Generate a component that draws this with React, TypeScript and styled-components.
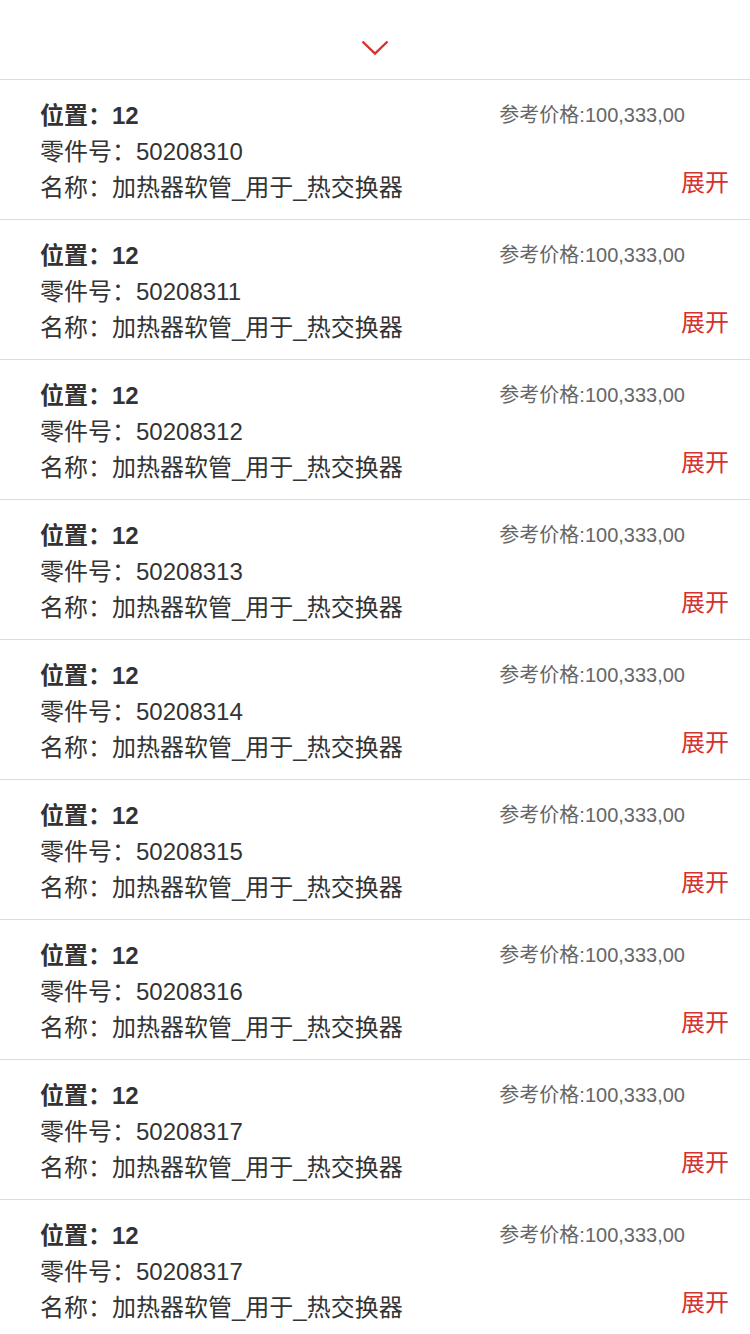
import styled, { createGlobalStyle } from "styled-components";

const GlobalStyle = createGlobalStyle`
    body {
        margin: 0;
        background: #fff;
        font-family: "Liberation Sans", "Noto Sans CJK SC", sans-serif;
        color: #333;
    }
`;

const Header = styled.div`
    height: 80px;
    border-bottom: 1px solid #dcdcdc;
    display: flex;
    justify-content: center;
    align-items: flex-start;
    padding-top: 40px;
    box-sizing: border-box;
`;

const List = styled.ul`
    list-style: none;
    margin: 0;
    padding: 0;
`;

const Row = styled.li`
    height: 140px;
    box-sizing: border-box;
    border-bottom: 1px solid #dcdcdc;
    padding: 18px 21px 0 40px;
    display: flex;
    justify-content: space-between;
`;

const Info = styled.div`
    display: flex;
    flex-direction: column;
`;

const Line = styled.p<{ $bold?: boolean }>`
    margin: 0;
    font-size: 24px;
    line-height: 36px;
    font-weight: ${props => (props.$bold ? 600 : 400)};
    white-space: nowrap;
`;

const Side = styled.div`
    display: flex;
    flex-direction: column;
    align-items: flex-end;
    justify-content: space-between;
    height: 108px;
`;

const Price = styled.span`
    font-size: 20px;
    line-height: 36px;
    color: #666;
    margin-right: 44px;
    margin-top: -1px;
    white-space: nowrap;
`;

const Toggle = styled.span`
    font-size: 24px;
    line-height: 36px;
    color: #d8302a;
    margin-bottom: 5px;
`;

const parts = ["50208310", "50208311", "50208312", "50208313", "50208314", "50208315", "50208316", "50208317", "50208317"];

export default function App() {
    return (
        <>
            <GlobalStyle />
            <Header>
                <svg width="28" height="16" viewBox="0 0 28 16">
                    <polyline points="1.5,1.5 14,13.5 26.5,1.5" fill="none" stroke="#d8302a" strokeWidth="2.4" />
                </svg>
            </Header>
            <List>
                {parts.map((no, i) => (
                    <Row key={i}>
                        <Info>
                            <Line $bold>位置：12</Line>
                            <Line>零件号：{no}</Line>
                            <Line>名称：加热器软管_用于_热交换器</Line>
                        </Info>
                        <Side>
                            <Price>参考价格:100,333,00</Price>
                            <Toggle>展开</Toggle>
                        </Side>
                    </Row>
                ))}
            </List>
        </>
    );
}
